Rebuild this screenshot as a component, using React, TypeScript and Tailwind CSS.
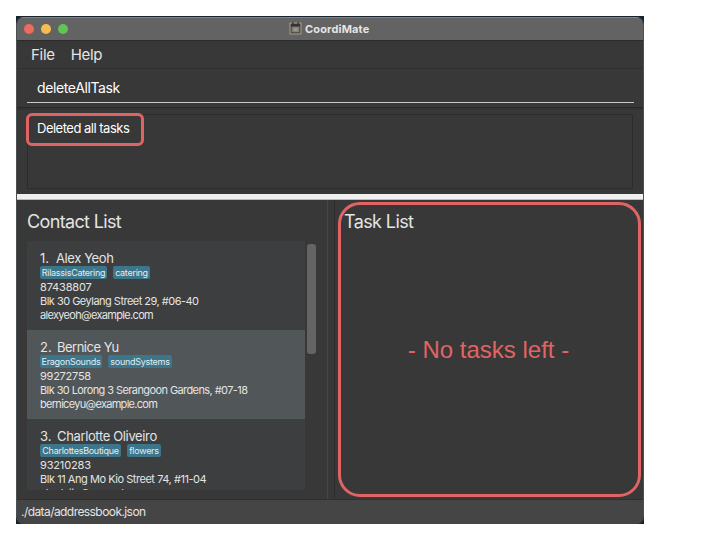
import React from "react";

type Tag = { label: string; box: string };
type Contact = {
  name: string;
  nameClass: string;
  tags: Tag[];
  phone: string;
  phoneClass: string;
  address: string;
  addressClass: string;
  email: string;
  emailClass: string;
  row: string;
};

const contacts: Contact[] = [
  {
    name: "Alex Yeoh",
    nameClass: "tracking-[-0.4px]",
    tags: [
      { label: "RilassisCatering", box: "w-[67px] tracking-[-0.28px]" },
      { label: "catering", box: "w-[37px] tracking-[-0.28px]" },
    ],
    phone: "87438807",
    phoneClass: "tracking-[-0.15px]",
    address: "Blk 30 Geylang Street 29, #06-40",
    addressClass: "tracking-[-0.52px]",
    email: "alexyeoh@example.com",
    emailClass: "tracking-[-0.68px]",
    row: "bg-[#3c3e3f]",
  },
  {
    name: "Bernice Yu",
    nameClass: "pl-px tracking-[-0.5px]",
    tags: [
      { label: "EragonSounds", box: "w-[62px] tracking-[-0.28px]" },
      { label: "soundSystems", box: "w-[64px] tracking-[-0.28px]" },
    ],
    phone: "99272758",
    phoneClass: "tracking-[-0.25px]",
    address: "Blk 30 Lorong 3 Serangoon Gardens, #07-18",
    addressClass: "tracking-[-0.59px]",
    email: "berniceyu@example.com",
    emailClass: "tracking-[-0.7px]",
    row: "bg-[#515658]",
  },
  {
    name: "Charlotte Oliveiro",
    nameClass: "pl-px tracking-[-0.36px]",
    tags: [
      { label: "CharlottesBoutique", box: "w-[81px] tracking-[-0.28px]" },
      { label: "flowers", box: "w-[34px] tracking-[-0.28px]" },
    ],
    phone: "93210283",
    phoneClass: "tracking-[-0.15px]",
    address: "Blk 11 Ang Mo Kio Street 74, #11-04",
    addressClass: "tracking-[-0.46px]",
    email: "charlotte@example.com",
    emailClass: "tracking-[-0.65px]",
    row: "bg-[#3c3e3f]",
  },
];

function CalendarIcon() {
  return (
    <svg width="13" height="13" viewBox="0 0 13 13">
      <rect x="0.5" y="0.5" width="12" height="12" rx="0.8" fill="#aaa083" />
      <rect x="1.5" y="1.5" width="10" height="10" fill="#4a4c4a" />
      <rect x="2" y="2" width="9" height="2.4" fill="#303638" />
      <rect x="2.8" y="4.8" width="7.4" height="5.4" fill="#85827a" />
      <rect x="3.2" y="0" width="1.3" height="2" fill="#303638" />
      <rect x="8.5" y="0" width="1.3" height="2" fill="#303638" />
      <rect x="5.2" y="6.4" width="2.8" height="2.4" fill="#a8a08a" />
    </svg>
  );
}

function ContactRow({ contact, index }: { contact: Contact; index: number }) {
  return (
    <div className={`h-[89px] shrink-0 pl-[13px] pt-[9px] ${contact.row}`}>
      <div className="flex h-4 text-[13px] leading-4">
        <span className="w-4">{index}.</span>
        <span className={contact.nameClass}>{contact.name}</span>
      </div>
      <div className="flex h-[13px] gap-[6px]">
        {contact.tags.map((tag) => (
          <span
            key={tag.label}
            className={`h-[13px] rounded-[2px] bg-[#3d758a] text-center text-[9px] leading-[13px] text-[#e3edf0] ${tag.box}`}
          >
            {tag.label}
          </span>
        ))}
      </div>
      <div className="pt-px text-[11px] leading-[14.1px]">
        <div className={contact.phoneClass}>{contact.phone}</div>
        <div className={contact.addressClass}>{contact.address}</div>
        <div className={contact.emailClass}>{contact.email}</div>
      </div>
    </div>
  );
}

export default function App() {
  return (
    <div className="h-[540px] w-[720px] overflow-hidden bg-white pl-4 pt-4 font-[Inter,sans-serif] text-[#e4e4e4]">
      <div className="h-[508px] w-[628px] bg-[#17232e] pt-px">
        <div className="relative flex h-[507px] w-[628px] flex-col overflow-hidden whitespace-nowrap rounded-[8px] border-x border-[#4b5153] bg-[#383838]">
          <header className="flex h-6 shrink-0 items-center border-b border-t border-b-[#2b2b2b] border-t-[#858585] bg-[#636363] pb-px">
            <div className="flex w-[272px] gap-[7px] pl-[7px]">
              <span className="size-[10px] rounded-full bg-[#ed6b5f]" />
              <span className="size-[10px] rounded-full bg-[#f5be4f]" />
              <span className="size-[10px] rounded-full bg-[#61c454]" />
            </div>
            <CalendarIcon />
            <span className="ml-[3px] text-[11px] font-bold leading-4 tracking-[0.15px]">CoordiMate</span>
          </header>

          <nav className="flex h-7 shrink-0 items-center gap-4 border-b border-[#303030] pl-[14px] text-[15px] leading-5 tracking-[-0.3px]">
            <span>File</span>
            <span>Help</span>
          </nav>

          <div className="h-[39px] shrink-0 border-b border-[#2a2a2a] px-[9px] pl-[10px]">
            <div className="h-[34px] border-b border-[#c9c9c9] pl-[10px] pt-[9px] text-[14px] leading-5 tracking-[-0.38px] text-white">
              deleteAllTask
            </div>
          </div>

          <div className="h-[86px] shrink-0 border-t-2 border-[#323232] pl-[10px] pr-[10px] pt-1">
            <div className="h-[75px] border border-[#2c2c2c]">
              <div className="-ml-[2px] -mt-[2px] h-[33px] w-[118px] rounded-[6px] border-[3px] border-[#e16464] pl-2 pt-[2px] text-[13px] leading-5 tracking-[-0.5px] text-white">
                Deleted all tasks
              </div>
            </div>
          </div>
          <div className="h-[6px] shrink-0 border-b border-[#bdbdbd] bg-[#f0f0f0]" />

          <main className="flex h-[299px] shrink-0">
            <section className="w-[311px] shrink-0 border-r border-[#474747] pl-[10px] pt-[11px]">
              <h2 className="h-[30px] text-[18px] leading-[22px] tracking-[-0.65px]">Contact List</h2>
              <div className="flex gap-[2px]">
                <div className="flex h-[249px] w-[278px] flex-col overflow-hidden">
                  {contacts.map((contact, i) => (
                    <ContactRow key={contact.name} contact={contact} index={i + 1} />
                  ))}
                </div>
                <div className="mt-[3px] h-[110px] w-[9px] rounded-[3px] bg-[#646464]" />
              </div>
            </section>
            <section className="ml-[6px] flex-1 border-l border-[#2c2c2c] pl-[3px] pt-[2px]">
              <div className="h-[295px] w-[303px] rounded-[22px] border-[3px] border-[#e16464]">
                <h2 className="pl-[3px] pt-[6px] text-[18px] leading-[22px] tracking-[-0.6px]">Task List</h2>
                <p className="mt-[103px] pr-[2px] text-center font-['Liberation_Sans',sans-serif] text-[24px] leading-7 text-[#e16464]">
                  - No tasks left -
                </p>
              </div>
            </section>
          </main>

          <footer className="flex h-[25px] shrink-0 items-center border-t border-[#303030] bg-[#454545] pl-1 text-[12px] leading-4 tracking-[-0.57px]">
            ./data/addressbook.json
          </footer>
        </div>
      </div>
    </div>
  );
}
